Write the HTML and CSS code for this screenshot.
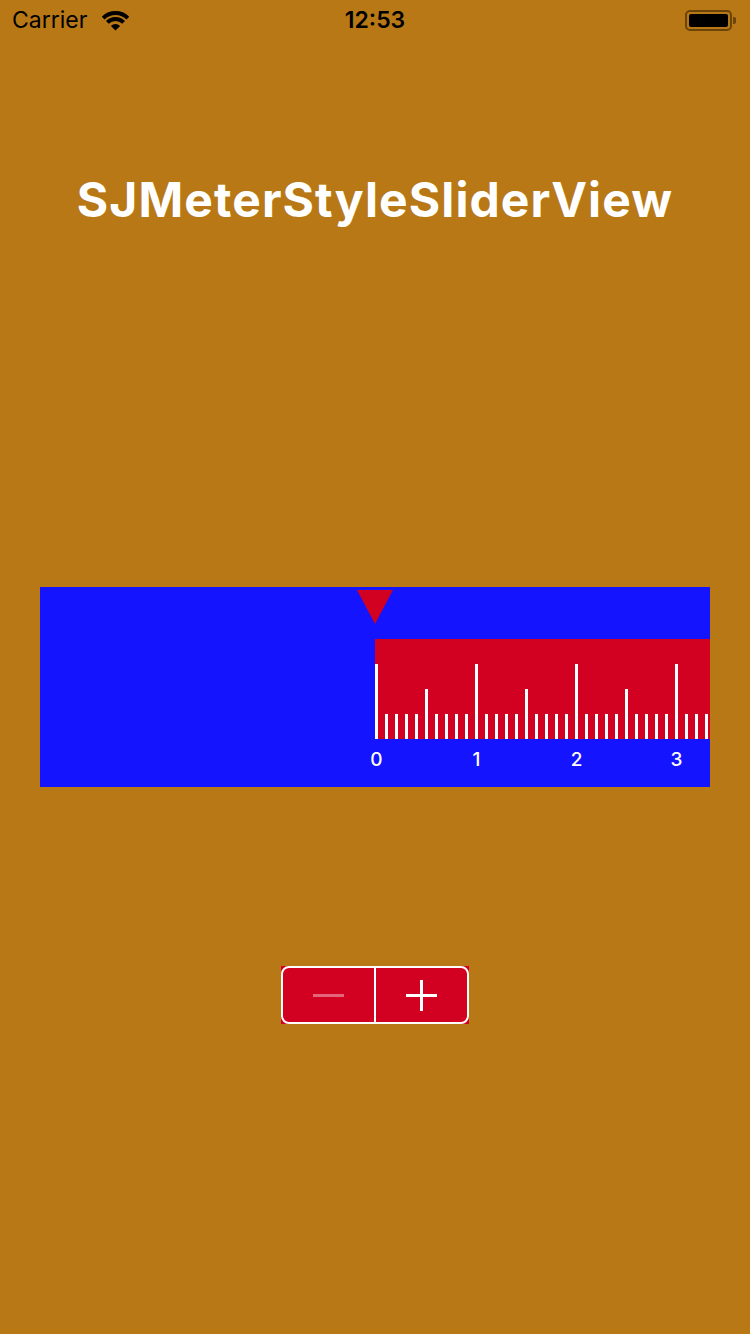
FILE: index.html
```html
<!DOCTYPE html>
<html>
<head>
<meta charset="utf-8">
<link rel="stylesheet" href="styles.css">
</head>
<body>
<div class="statusbar">
  <div class="sb-left">
    <span class="carrier">Carrier</span>
    <svg class="wifi" width="27" height="22" viewBox="0 0 27 22">
      <path d="M13.5 21.5 L8.9 16.9 A6.5 6.5 0 0 1 18.1 16.9 Z" fill="#000"/>
      <path d="M5.4 13.4 A11.5 11.5 0 0 1 21.6 13.4" fill="none" stroke="#000" stroke-width="4"/>
      <path d="M1.1 9.1 A17.5 17.5 0 0 1 25.9 9.1" fill="none" stroke="#000" stroke-width="4"/>
    </svg>
  </div>
  <div class="time">12:53</div>
  <div class="sb-right">
    <div class="battery"><div class="battery-fill"></div></div>
    <div class="battery-nub"></div>
  </div>
</div>

<h1 class="title">SJMeterStyleSliderView</h1>

<div class="slider">
  <div class="pointer"></div>
  <div class="ruler">
    <div class="band" id="band"></div>
    <div class="labels" id="labels"></div>
  </div>
</div>

<div class="stepper">
  <div class="stepper-inner">
    <div class="seg seg-minus"><span class="minus"></span></div>
    <div class="divider"></div>
    <div class="seg seg-plus"><span class="plus-h"></span><span class="plus-v"></span></div>
  </div>
</div>

<script src="script.js"></script>
</body>
</html>
```

FILE: script.js
```js
var band = document.getElementById('band');
for (var i = 0; i <= 36; i++) {
  var t = document.createElement('div');
  t.className = 'tick ' + (i % 10 === 0 ? 'major' : (i % 5 === 0 ? 'mid' : 'minor'));
  band.appendChild(t);
}
var labels = document.getElementById('labels');
for (var j = 0; j <= 3; j++) {
  var l = document.createElement('div');
  l.className = 'label';
  l.textContent = j;
  labels.appendChild(l);
}
```

FILE: styles.css
```css
html, body {
  margin: 0;
  padding: 0;
}
body {
  background: #b97816;
  width: 750px;
  height: 1334px;
  overflow: hidden;
  font-family: Inter, "Noto Sans", sans-serif;
}
.statusbar {
  height: 40px;
  display: flex;
  align-items: center;
  justify-content: space-between;
  padding: 0 14px 0 12px;
  position: relative;
}
.sb-left {
  display: flex;
  align-items: center;
  gap: 15px;
}
.carrier {
  font-size: 23px;
  color: #000;
  line-height: 40px;
}
.wifi {
  display: block;
  margin-top: 0;
}
.time {
  position: absolute;
  left: 0;
  right: 0;
  text-align: center;
  font-size: 23px;
  font-weight: 600;
  color: #000;
  line-height: 40px;
  pointer-events: none;
}
.sb-right {
  display: flex;
  align-items: center;
  gap: 1px;
}
.battery {
  width: 47px;
  height: 21px;
  box-sizing: border-box;
  border: 2px solid #6a4409;
  border-radius: 5px;
  padding: 2px;
}
.battery-fill {
  width: 100%;
  height: 100%;
  background: #000;
  border-radius: 2px;
}
.battery-nub {
  width: 3px;
  height: 7px;
  background: #6a4409;
  border-radius: 0 2px 2px 0;
}
.title {
  margin: 131px 0 0;
  text-align: center;
  color: #fff;
  font-size: 48px;
  font-weight: 700;
  line-height: 58px;
  letter-spacing: 1.1px;
}
.slider {
  margin: 358px 0 0 40px;
  width: 670px;
  height: 200px;
  background: #1414ff;
  overflow: hidden;
  padding-top: 3px;
  box-sizing: border-box;
}
.pointer {
  margin-left: 317px;
  width: 0;
  height: 0;
  border-left: 18px solid transparent;
  border-right: 18px solid transparent;
  border-top: 34px solid #d20021;
}
.ruler {
  margin: 15px 0 0 335px;
  width: 400px;
}
.band {
  height: 100px;
  background: #d20021;
  display: flex;
  align-items: flex-end;
  gap: 7px;
}
.tick {
  flex: none;
  width: 3px;
  background: #fff;
}
.tick.major { height: 75px; }
.tick.mid { height: 50px; }
.tick.minor { height: 25px; }
.labels {
  display: flex;
  margin-left: -48.5px;
  margin-top: 10px;
}
.label {
  flex: none;
  width: 100px;
  text-align: center;
  color: #fff;
  font-size: 19px;
  font-weight: 500;
  line-height: 22px;
}
.stepper {
  margin: 179px auto 0;
  width: 188px;
  height: 58px;
  background: #d20021;
}
.stepper-inner {
  height: 100%;
  box-sizing: border-box;
  border: 2px solid #fff;
  border-radius: 8px;
  display: flex;
}
.seg {
  flex: 1;
  position: relative;
  display: flex;
  align-items: center;
  justify-content: center;
}
.divider {
  width: 2px;
  background: #fff;
}
.minus {
  width: 31px;
  height: 3px;
  background: #e4667a;
}
.plus-h {
  position: absolute;
  width: 31px;
  height: 3px;
  background: #fff;
}
.plus-v {
  position: absolute;
  width: 3px;
  height: 31px;
  background: #fff;
}
```
